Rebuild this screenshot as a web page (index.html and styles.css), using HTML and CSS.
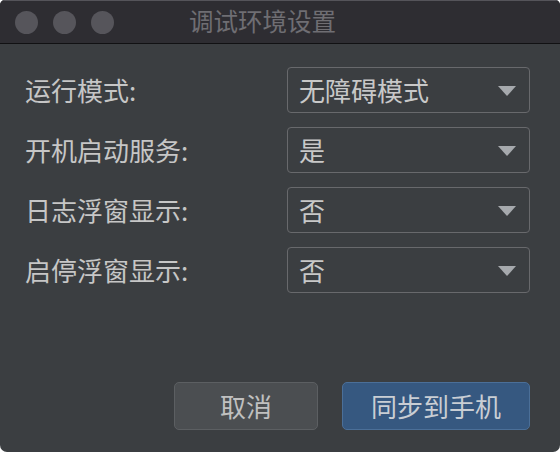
FILE: index.html
```html
<!DOCTYPE html>
<html lang="zh">
<head>
<meta charset="utf-8">
<title>调试环境设置</title>
<link rel="stylesheet" href="styles.css">
</head>
<body>
<div class="window">
  <div class="titlebar">
    <div class="lights">
      <span class="light"></span>
      <span class="light"></span>
      <span class="light"></span>
    </div>
    <div class="title">调试环境设置</div>
  </div>
  <div class="content">
    <div class="form">
      <div class="row">
        <div class="label">运行模式:</div>
        <div class="select"><span>无障碍模式</span><span class="arrow"></span></div>
      </div>
      <div class="row">
        <div class="label">开机启动服务:</div>
        <div class="select"><span>是</span><span class="arrow"></span></div>
      </div>
      <div class="row">
        <div class="label">日志浮窗显示:</div>
        <div class="select"><span>否</span><span class="arrow"></span></div>
      </div>
      <div class="row">
        <div class="label">启停浮窗显示:</div>
        <div class="select"><span>否</span><span class="arrow"></span></div>
      </div>
    </div>
    <div class="footer">
      <button class="btn btn-cancel">取消</button>
      <button class="btn btn-primary">同步到手机</button>
    </div>
  </div>
</div>
</body>
</html>
```

FILE: styles.css
```css
html, body {
  margin: 0;
  padding: 0;
  background: #ffffff;
}
body {
  font-family: "Noto Sans CJK SC", "Noto Sans", sans-serif;
}
.window {
  width: 560px;
  height: 452px;
  display: flex;
  flex-direction: column;
  background: #3b3e41;
  border-radius: 5px 5px 7px 7px;
  overflow: hidden;
}
.titlebar {
  flex: none;
  display: flex;
  align-items: center;
  background: #2e2d32;
  border-top: 1px solid #55545a;
  border-bottom: 1px solid #111113;
  box-sizing: border-box;
  height: 44px;
}
.lights {
  display: flex;
  gap: 15px;
  padding-left: 15px;
}
.light {
  width: 23px;
  height: 23px;
  border-radius: 50%;
  background: #56555b;
}
.title {
  margin-left: 75px;
  font-size: 24.5px;
  color: #6f6e73;
  line-height: 1;
  padding-bottom: 2px;
}
.content {
  flex: 1;
  display: flex;
  flex-direction: column;
  padding: 23px 30px 22px 25px;
}
.form {
  display: flex;
  flex-direction: column;
  gap: 14px;
}
.row {
  display: grid;
  grid-template-columns: 1fr 243px;
  align-items: center;
  height: 46px;
}
.label {
  font-size: 26px;
  color: #c6c6c6;
  line-height: 1;
}
.select {
  height: 46px;
  box-sizing: border-box;
  border: 1.5px solid #68696c;
  border-radius: 4px;
  display: flex;
  align-items: center;
  justify-content: space-between;
  padding: 0 13px 0 11px;
  font-size: 26px;
  color: #c8c8c8;
  line-height: 1;
}
.arrow {
  width: 0;
  height: 0;
  border-left: 9px solid transparent;
  border-right: 9px solid transparent;
  border-top: 10px solid #a6a9ad;
  margin-top: 2px;
}
.footer {
  margin-top: auto;
  display: flex;
  justify-content: flex-end;
  gap: 24px;
}
.btn {
  height: 48px;
  box-sizing: border-box;
  border-radius: 5px;
  font-family: inherit;
  font-size: 26px;
  line-height: 1;
  padding: 0;
  cursor: pointer;
}
.btn-cancel {
  width: 144px;
  background: #4b4e51;
  border: 1.5px solid #5c5f62;
  color: #c0c0c0;
}
.btn-primary {
  width: 188px;
  background: #365880;
  border: 1.5px solid #4b6f98;
  color: #c9ced4;
}
```
